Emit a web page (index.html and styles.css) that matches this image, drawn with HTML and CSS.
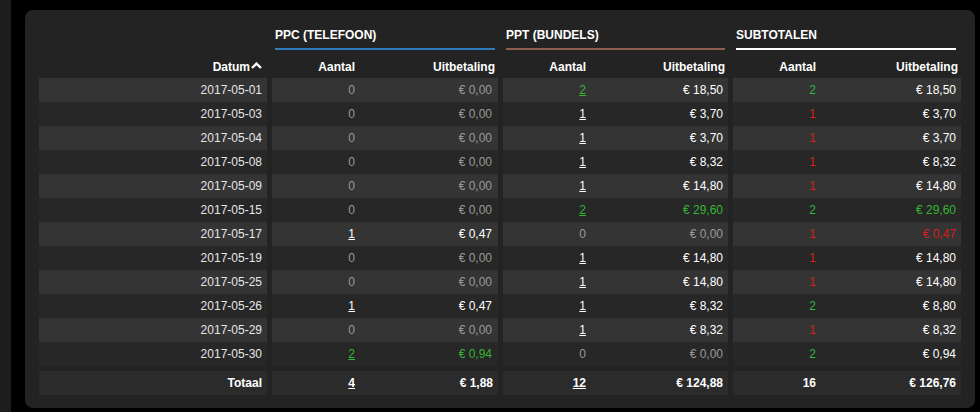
FILE: index.html
```html
<!DOCTYPE html>
<html lang="nl">
  <head>
    <meta charset="UTF-8" />
    <meta name="viewport" content="width=device-width, initial-scale=1.0" />
    <title>Uitbetalingen</title>
    <link rel="stylesheet" href="styles.css">
  </head>
  <body>
    <div class="side-strip"></div>

    <div class="panel">
      <table class="payouts">
        <colgroup>
          <col class="c-date">
          <col class="c-count">
          <col class="c-pay-ppc">
          <col class="c-count">
          <col class="c-pay-ppt">
          <col class="c-count">
          <col class="c-pay-sub">
        </colgroup>
        <thead>
          <tr class="group-row">
            <th></th>
            <th colspan="2" class="g"><div class="group-title ppc">PPC (TELEFOON)</div></th>
            <th colspan="2" class="g"><div class="group-title ppt">PPT (BUNDELS)</div></th>
            <th colspan="2" class="g"><div class="group-title sub">SUBTOTALEN</div></th>
          </tr>
          <tr class="col-row">
            <th class="date">Datum<svg class="sort" width="11" height="7" viewBox="0 0 11 7"><path d="M1 6 L5.5 1.6 L10 6" fill="none" stroke="#fff" stroke-width="2.4"/></svg></th>
            <th class="g">Aantal</th>
            <th class="pay">Uitbetaling</th>
            <th class="g">Aantal</th>
            <th class="pay">Uitbetaling</th>
            <th class="g">Aantal</th>
            <th class="pay">Uitbetaling</th>
          </tr>
        </thead>
        <tbody>
          <tr>
            <td class="date">2017-05-01</td>
            <td class="g muted">0</td><td class="pay muted">€ 0,00</td>
            <td class="g"><a class="up">2</a></td><td class="pay">€ 18,50</td>
            <td class="g up">2</td><td class="pay">€ 18,50</td>
          </tr>
          <tr>
            <td class="date">2017-05-03</td>
            <td class="g muted">0</td><td class="pay muted">€ 0,00</td>
            <td class="g"><a>1</a></td><td class="pay">€ 3,70</td>
            <td class="g down">1</td><td class="pay">€ 3,70</td>
          </tr>
          <tr>
            <td class="date">2017-05-04</td>
            <td class="g muted">0</td><td class="pay muted">€ 0,00</td>
            <td class="g"><a>1</a></td><td class="pay">€ 3,70</td>
            <td class="g down">1</td><td class="pay">€ 3,70</td>
          </tr>
          <tr>
            <td class="date">2017-05-08</td>
            <td class="g muted">0</td><td class="pay muted">€ 0,00</td>
            <td class="g"><a>1</a></td><td class="pay">€ 8,32</td>
            <td class="g down">1</td><td class="pay">€ 8,32</td>
          </tr>
          <tr>
            <td class="date">2017-05-09</td>
            <td class="g muted">0</td><td class="pay muted">€ 0,00</td>
            <td class="g"><a>1</a></td><td class="pay">€ 14,80</td>
            <td class="g down">1</td><td class="pay">€ 14,80</td>
          </tr>
          <tr>
            <td class="date">2017-05-15</td>
            <td class="g muted">0</td><td class="pay muted">€ 0,00</td>
            <td class="g"><a class="up">2</a></td><td class="pay up">€ 29,60</td>
            <td class="g up">2</td><td class="pay up">€ 29,60</td>
          </tr>
          <tr>
            <td class="date">2017-05-17</td>
            <td class="g"><a>1</a></td><td class="pay">€ 0,47</td>
            <td class="g muted">0</td><td class="pay muted">€ 0,00</td>
            <td class="g down">1</td><td class="pay down">€ 0,47</td>
          </tr>
          <tr>
            <td class="date">2017-05-19</td>
            <td class="g muted">0</td><td class="pay muted">€ 0,00</td>
            <td class="g"><a>1</a></td><td class="pay">€ 14,80</td>
            <td class="g down">1</td><td class="pay">€ 14,80</td>
          </tr>
          <tr>
            <td class="date">2017-05-25</td>
            <td class="g muted">0</td><td class="pay muted">€ 0,00</td>
            <td class="g"><a>1</a></td><td class="pay">€ 14,80</td>
            <td class="g down">1</td><td class="pay">€ 14,80</td>
          </tr>
          <tr>
            <td class="date">2017-05-26</td>
            <td class="g"><a>1</a></td><td class="pay">€ 0,47</td>
            <td class="g"><a>1</a></td><td class="pay">€ 8,32</td>
            <td class="g up">2</td><td class="pay">€ 8,80</td>
          </tr>
          <tr>
            <td class="date">2017-05-29</td>
            <td class="g muted">0</td><td class="pay muted">€ 0,00</td>
            <td class="g"><a>1</a></td><td class="pay">€ 8,32</td>
            <td class="g down">1</td><td class="pay">€ 8,32</td>
          </tr>
          <tr>
            <td class="date">2017-05-30</td>
            <td class="g"><a class="up">2</a></td><td class="pay up">€ 0,94</td>
            <td class="g muted">0</td><td class="pay muted">€ 0,00</td>
            <td class="g up">2</td><td class="pay">€ 0,94</td>
          </tr>
        </tbody>
        <tfoot>
          <tr>
            <td class="date">Totaal</td>
            <td class="g"><a>4</a></td><td class="pay">€ 1,88</td>
            <td class="g"><a>12</a></td><td class="pay">€ 124,88</td>
            <td class="g">16</td><td class="pay">€ 126,76</td>
          </tr>
        </tfoot>
      </table>
    </div>
  </body>
</html>
```

FILE: styles.css
```css
* {
  margin: 0;
  padding: 0;
  box-sizing: border-box;
}

body {
  display: flex;
  height: 412px;
  overflow: hidden;
  background-color: #000;
  font-family: "Liberation Sans", Arial, sans-serif;
  font-size: 12px;
  color: #e4e4e4;
}

.side-strip {
  width: 11px;
  flex-shrink: 0;
  background-color: #1d1d1d;
}

.panel {
  margin: 10px 0 0 14px;
  width: 950px;
  height: 398px;
  flex-shrink: 0;
  background-color: #232323;
  border-radius: 8px;
  padding: 18px 14px 0;
}

.payouts {
  width: 922px;
  table-layout: fixed;
  border-collapse: separate;
  border-spacing: 0;
}

.c-date { width: 228px; }
.c-count { width: 93px; }
.c-pay-ppc { width: 138px; }
.c-pay-ppt { width: 137px; }
.c-pay-sub { width: 140px; }

.payouts th,
.payouts td {
  text-align: right;
  padding: 0 5px 0 0;
  line-height: 15px;
  white-space: nowrap;
}

.payouts th {
  color: #fff;
  font-weight: bold;
}

.payouts .g {
  border-left: 5px solid #232323;
}

.group-row th {
  text-align: left;
  padding: 0;
  vertical-align: top;
}

.group-title {
  margin: 0 3px;
  padding-bottom: 5px;
  border-bottom: 2px solid #fff;
}

.group-title.ppc {
  border-color: #2c7cbd;
}

.group-title.ppt {
  border-color: #8d5d50;
}

.group-title.sub {
  margin-right: 5px;
}

.col-row th {
  height: 28px;
  vertical-align: bottom;
  padding-bottom: 3px;
}

.col-row th.pay {
  padding-right: 3px;
}

.sort {
  vertical-align: 2px;
  margin-left: 1px;
}

tbody td,
tfoot td {
  height: 24px;
  color: #fff;
}

tbody tr:nth-child(odd) td {
  background-color: #343434;
}

tbody tr:nth-child(even) td {
  background-color: #272727;
}

tbody td.date {
  color: #e6e6e6;
}

.payouts td.pay {
  padding-right: 5px;
}

tbody td.pay:nth-child(3) {
  padding-right: 6px;
}

.payouts .muted {
  color: #9a9a9a;
}

.payouts .up {
  color: #35b535;
}

.payouts .down {
  color: #d42020;
}

.payouts a {
  color: inherit;
  text-decoration: underline;
}

.payouts a.up {
  color: #35b535;
}

tfoot td {
  font-weight: bold;
  background-color: #2b2b2b;
  border-top: 5px solid #232323;
  height: 29px;
}
```
